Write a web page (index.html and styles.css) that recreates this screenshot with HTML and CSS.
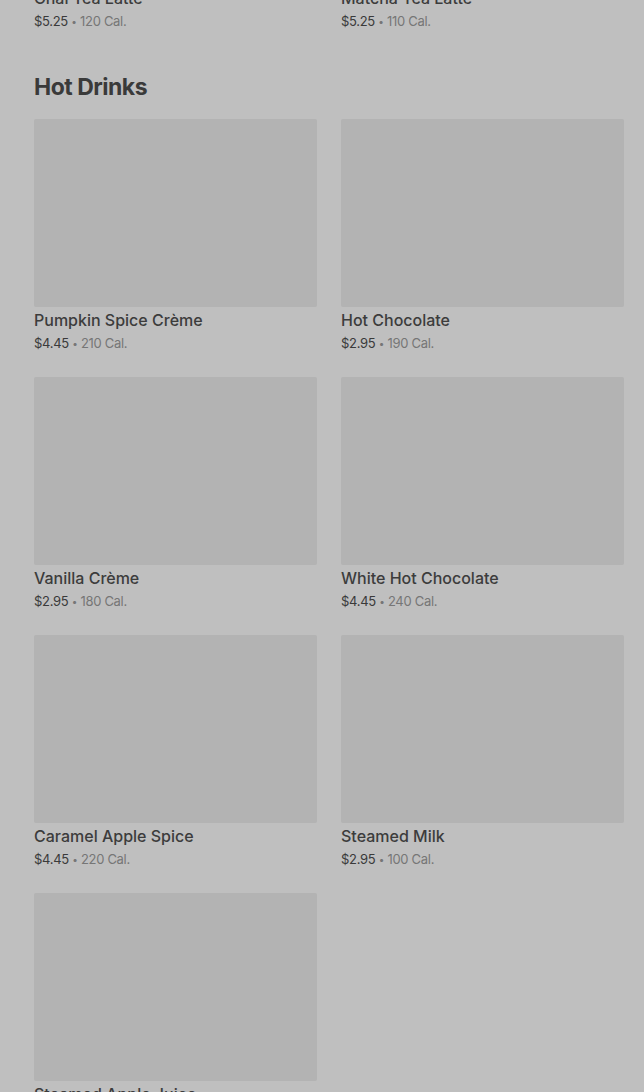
FILE: index.html
```html
<!DOCTYPE html>
<html lang="en">
<head>
<meta charset="utf-8">
<title>Menu</title>
<link rel="stylesheet" href="styles.css">
</head>
<body>
<main class="menu">
  <section class="section section-prev">
    <div class="grid">
      <article class="item">
        <div class="thumb"></div>
        <h3 class="item-name">Chai Tea Latte</h3>
        <p class="item-meta"><span class="price">$5.25</span> <span class="dot">•</span> <span class="cal">120 Cal.</span></p>
      </article>
      <article class="item">
        <div class="thumb"></div>
        <h3 class="item-name">Matcha Tea Latte</h3>
        <p class="item-meta"><span class="price">$5.25</span> <span class="dot">•</span> <span class="cal">110 Cal.</span></p>
      </article>
    </div>
  </section>
  <section class="section">
    <h2 class="section-title">Hot Drinks</h2>
    <div class="grid">
      <article class="item">
        <div class="thumb"></div>
        <h3 class="item-name">Pumpkin Spice Crème</h3>
        <p class="item-meta"><span class="price">$4.45</span> <span class="dot">•</span> <span class="cal">210 Cal.</span></p>
      </article>
      <article class="item">
        <div class="thumb"></div>
        <h3 class="item-name">Hot Chocolate</h3>
        <p class="item-meta"><span class="price">$2.95</span> <span class="dot">•</span> <span class="cal">190 Cal.</span></p>
      </article>
      <article class="item">
        <div class="thumb"></div>
        <h3 class="item-name">Vanilla Crème</h3>
        <p class="item-meta"><span class="price">$2.95</span> <span class="dot">•</span> <span class="cal">180 Cal.</span></p>
      </article>
      <article class="item">
        <div class="thumb"></div>
        <h3 class="item-name">White Hot Chocolate</h3>
        <p class="item-meta"><span class="price">$4.45</span> <span class="dot">•</span> <span class="cal">240 Cal.</span></p>
      </article>
      <article class="item">
        <div class="thumb"></div>
        <h3 class="item-name">Caramel Apple Spice</h3>
        <p class="item-meta"><span class="price">$4.45</span> <span class="dot">•</span> <span class="cal">220 Cal.</span></p>
      </article>
      <article class="item">
        <div class="thumb"></div>
        <h3 class="item-name">Steamed Milk</h3>
        <p class="item-meta"><span class="price">$2.95</span> <span class="dot">•</span> <span class="cal">100 Cal.</span></p>
      </article>
      <article class="item">
        <div class="thumb"></div>
        <h3 class="item-name">Steamed Apple Juice</h3>
        <p class="item-meta"><span class="price">$3.45</span> <span class="dot">•</span> <span class="cal">190 Cal.</span></p>
      </article>
    </div>
  </section>
</main>
</body>
</html>
```
FILE: styles.css
```css
html, body {
  margin: 0;
  padding: 0;
  background: #bfbfbf;
  height: 1092px;
  overflow: hidden;
}
body {
  font-family: Inter, "Noto Sans", sans-serif;
  color: #333333;
}
.menu {
  padding: 0 20px 0 34px;
  margin-top: -203px;
}
.section-prev {
  margin-bottom: 39px;
}
.section-title {
  margin: 0 0 16px;
  font-size: 23px;
  line-height: 32px;
  font-weight: 700;
  letter-spacing: -0.5px;
  color: #3a3a3a;
}
.grid {
  display: grid;
  grid-template-columns: 283px 283px;
  column-gap: 24px;
  row-gap: 23px;
}
.item {
  display: flex;
  flex-direction: column;
}
.thumb {
  height: 188px;
  background: #b3b3b3;
  border-radius: 2px;
}
.item-name {
  margin: 2px 0 0;
  font-size: 16px;
  line-height: 22px;
  font-weight: 500;
  color: #3c3c3c;
}
.item-meta {
  margin: 1px 0 0;
  font-size: 13px;
  line-height: 22px;
  letter-spacing: -0.3px;
  color: #767676;
}
.price {
  color: #3a3a3a;
}
.dot {
  font-size: 10px;
  line-height: 0;
  vertical-align: 1px;
  color: #767676;
}
.cal {
  color: #767676;
}
```
